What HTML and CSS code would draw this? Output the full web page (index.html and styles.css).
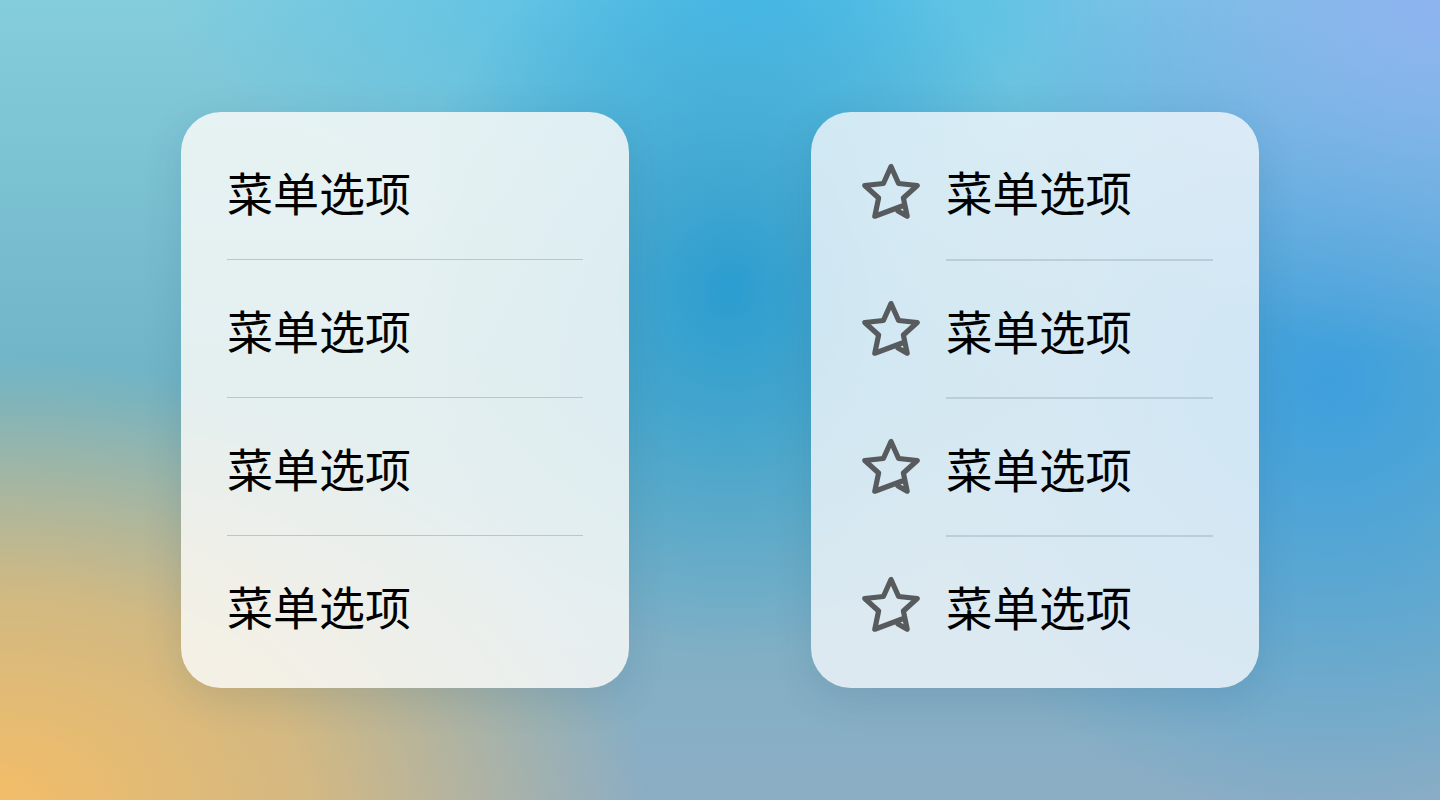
FILE: index.html
```html
<!DOCTYPE html>
<html lang="zh-CN">
<head>
  <meta charset="UTF-8">
  <meta name="viewport" content="width=device-width, initial-scale=1.0">
  <title>菜单</title>
  <link rel="stylesheet" href="styles.css">
</head>
<body>
  <div class="stage">
    <!-- Plain menu -->
    <ul class="menu">
      <li class="item"><span class="label">菜单选项</span></li>
      <li class="item"><span class="label">菜单选项</span></li>
      <li class="item"><span class="label">菜单选项</span></li>
      <li class="item"><span class="label">菜单选项</span></li>
    </ul>

    <!-- Menu with leading icons -->
    <ul class="menu menu-icons">
      <li class="item">
        <svg class="icon" viewBox="0 0 72 72"><path d="M43 54 L52.2 59.2 L48.4 41 L62.2 28.5 L43.6 26.5 L36 9.5 L28.4 26.5 L9.8 28.5 L23.6 41 L19.8 59.2 L48.5 48.5"/></svg>
        <span class="label">菜单选项</span>
      </li>
      <li class="item">
        <svg class="icon" viewBox="0 0 72 72"><path d="M43 54 L52.2 59.2 L48.4 41 L62.2 28.5 L43.6 26.5 L36 9.5 L28.4 26.5 L9.8 28.5 L23.6 41 L19.8 59.2 L48.5 48.5"/></svg>
        <span class="label">菜单选项</span>
      </li>
      <li class="item">
        <svg class="icon" viewBox="0 0 72 72"><path d="M43 54 L52.2 59.2 L48.4 41 L62.2 28.5 L43.6 26.5 L36 9.5 L28.4 26.5 L9.8 28.5 L23.6 41 L19.8 59.2 L48.5 48.5"/></svg>
        <span class="label">菜单选项</span>
      </li>
      <li class="item">
        <svg class="icon" viewBox="0 0 72 72"><path d="M43 54 L52.2 59.2 L48.4 41 L62.2 28.5 L43.6 26.5 L36 9.5 L28.4 26.5 L9.8 28.5 L23.6 41 L19.8 59.2 L48.5 48.5"/></svg>
        <span class="label">菜单选项</span>
      </li>
    </ul>
  </div>
</body>
</html>
```

FILE: styles.css
```css
* {
  margin: 0;
  padding: 0;
  box-sizing: border-box;
}

body {
  font-family: "Noto Sans CJK SC", "Noto Sans", sans-serif;
  color: #000;
  height: 100vh;
  overflow: hidden;
  background:
    radial-gradient(ellipse 760px 520px at 0% 100%, #f2bd68 0%, rgba(236, 188, 108, 0.75) 40%, rgba(236, 188, 108, 0) 85%),
    radial-gradient(ellipse 520px 420px at 100% 0%, #8eb3f0 0%, rgba(142, 179, 240, 0) 85%),
    radial-gradient(ellipse 420px 460px at 730px 290px, #2b9dd0 0%, rgba(43, 157, 208, 0) 80%),
    radial-gradient(ellipse 520px 520px at 1330px 380px, #3e9fdd 0%, rgba(62, 159, 221, 0) 85%),
    radial-gradient(ellipse 700px 260px at 760px 0%, #4cbde8 0%, rgba(76, 189, 232, 0) 85%),
    linear-gradient(to bottom, #84cddd 0%, #6fb3c6 50%, #8cadc4 100%);
}

.stage {
  height: 100%;
  display: flex;
  align-items: center;
  justify-content: center;
  gap: 182px;
}

.menu {
  list-style: none;
  width: 448px;
  height: 576px;
  padding: 10px 46px 15px;
  border-radius: 40px;
  background: rgba(250, 250, 248, 0.84);
  box-shadow: 0 10px 40px rgba(20, 60, 90, 0.12);
}

.item {
  display: flex;
  align-items: stretch;
  height: 137px;
}

.label {
  flex: 1;
  display: flex;
  align-items: center;
  font-size: 46px;
}

.item + .item {
  height: 138px;
}

.item + .item .label {
  border-top: 1px solid #c0c4c4;
}

/* icon variant */
.menu-icons {
  padding-left: 44px;
  background: rgba(244, 248, 251, 0.8);
}

.menu-icons .label {
  font-size: 46.5px;
}

.menu-icons .item + .item .label {
  border-top: 2px solid rgba(160, 180, 192, 0.5);
}

.icon {
  width: 72px;
  height: 72px;
  flex: none;
  align-self: center;
  margin-right: 19px;
  margin-top: 4px;
}

.icon path {
  fill: none;
  stroke: #585b5d;
  stroke-width: 5.2;
  stroke-linejoin: round;
  stroke-linecap: round;
}
```
